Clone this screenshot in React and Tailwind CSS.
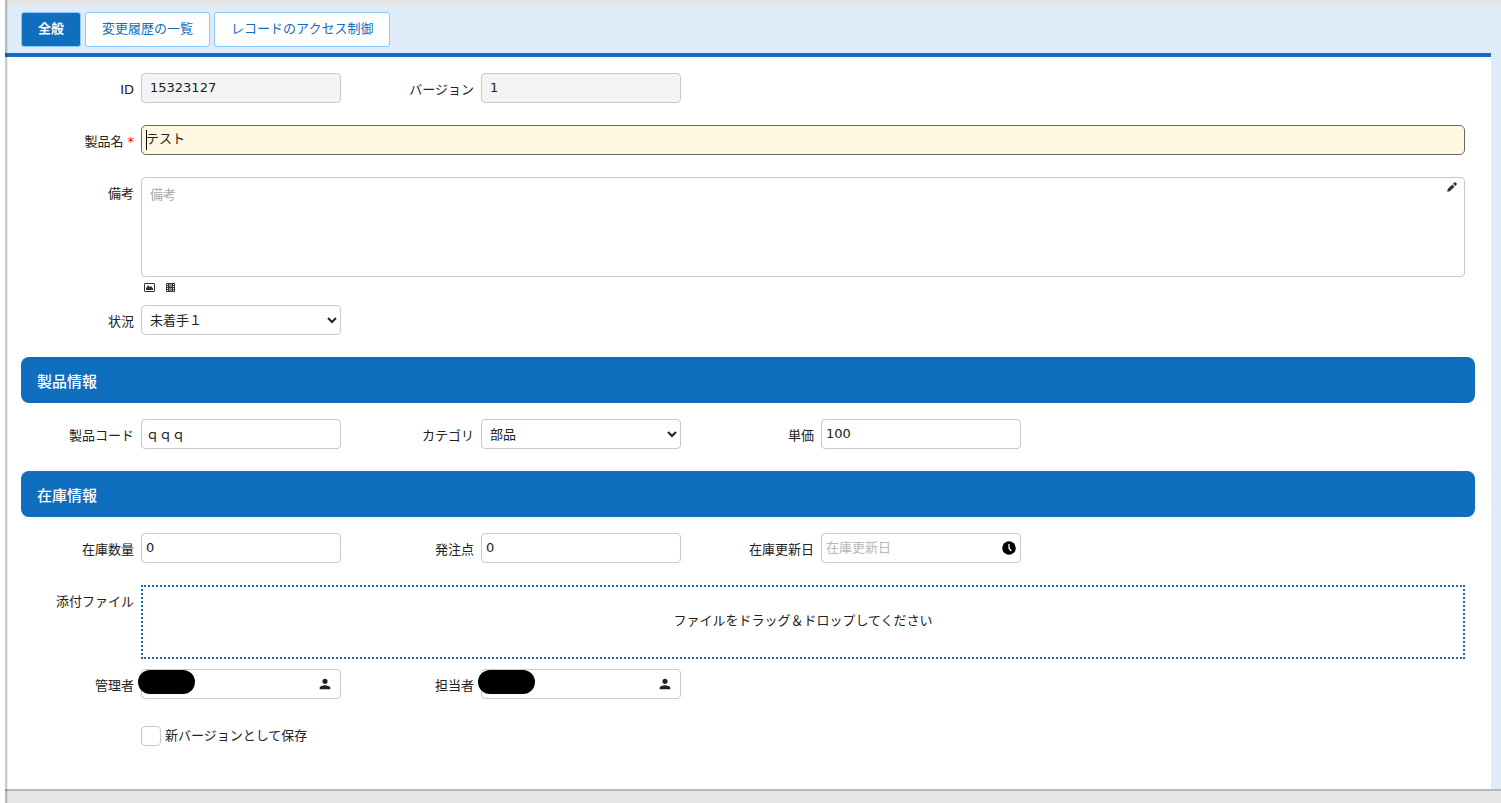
import { useState } from "react";
import { MdPerson } from "react-icons/md";
import clsx from "clsx";

const TABS = [
  { id: "general", label: "全般" },
  { id: "history", label: "変更履歴の一覧" },
  { id: "access", label: "レコードのアクセス制御" },
];

const BOX = "h-[30px] w-[200px] rounded-[4px] border border-[#c8c8c8] text-[13px] text-[#222]";

function Field({ label, required, wide, children }) {
  return (
    <div className={clsx("flex", wide ? "w-[1444px]" : "w-[320px]")}>
      <div className="h-[30px] w-[120px] shrink-0 pt-[7px] pr-[7px] text-right leading-5 whitespace-nowrap">
        {label}
        {required && <span className="pl-1 text-[#f00]">*</span>}
      </div>
      {children}
    </div>
  );
}

function ReadOnly({ value }) {
  return <div className={clsx(BOX, "bg-[#f4f4f4] pl-2 leading-[28px]")}>{value}</div>;
}

function TextInput({ defaultValue, placeholder }) {
  return (
    <input
      defaultValue={defaultValue}
      placeholder={placeholder}
      className={clsx(BOX, "bg-white pb-[2px] pl-1 outline-none placeholder:text-[#b8b8b8]")}
    />
  );
}

function Select({ value }) {
  return (
    <button type="button" className={clsx(BOX, "flex items-center justify-between bg-white pr-[3px] pl-2")}>
      <span className="pt-[2px]">{value}</span>
      <svg width="10" height="10" viewBox="0 0 10 10" fill="none" stroke="#222" strokeWidth="2">
        <path d="M1 3l4 4 4-4" />
      </svg>
    </button>
  );
}

function UserPicker() {
  return (
    <div className={clsx(BOX, "relative flex items-center justify-end bg-white pr-[7px]")}>
      <span className="absolute top-0 -left-[4px] h-6 w-[57px] rounded-full bg-black" />
      <MdPerson size={16} />
    </div>
  );
}

function SectionHeader({ title }) {
  return (
    <h2 className="flex h-[46px] w-[1454px] items-center rounded-lg bg-[#106ebe] px-4 pt-1 text-[15px] font-medium text-white">
      {title}
    </h2>
  );
}

function PencilIcon() {
  return (
    <svg width="10" height="10" viewBox="0 0 10 10" fill="#333">
      <path d="M.2 9.800l.5-2.700L5.300 2.500l2.200 2.200-4.600 4.600zM6 1.800L7.300.5a1 1 0 0 1 1.400 0l.8.8a1 1 0 0 1 0 1.400L8.200 4z" />
    </svg>
  );
}

function ImageIcon() {
  return (
    <svg width="11" height="9" viewBox="0 0 11 9">
      <rect x=".5" y=".5" width="10" height="8" rx=".5" fill="#fff" stroke="#333" />
      <path d="M2 7V5l1-1 1-2 1.500 2L7 3l2 2.500V7z" fill="#333" />
    </svg>
  );
}

function VideoIcon() {
  return (
    <svg width="9" height="9" viewBox="0 0 9 9">
      <rect width="9" height="9" rx=".8" fill="#333" />
      <path d="M1 1h1v1H1zM1 3h1v1H1zM1 5h1v1H1zM1 7h1v1H1zM7 1h1v1H7zM7 3h1v1H7zM7 5h1v1H7zM7 7h1v1H7z" fill="#fff" />
      <path d="M3 1h3v3H3zM3 5h3v3H3z" fill="#888" />
    </svg>
  );
}

function ClockIcon() {
  return (
    <svg width="14" height="14" viewBox="0 0 14 14">
      <circle cx="7" cy="7" r="6.8" fill="#000" />
      <path d="M7 3v4.200l2.200 2.800" fill="none" stroke="#fff" strokeWidth="1.300" />
    </svg>
  );
}

export default function App() {
  const [activeTab, setActiveTab] = useState("general");

  return (
    <div className="flex h-[803px] w-[1501px] overflow-hidden bg-white pl-[5px] font-['DejaVu_Sans','Noto_Sans_CJK_JP',sans-serif] text-[13px] text-[#222]">
      <div className="relative flex flex-1 flex-col bg-[#e6e6e6] pt-[6px]">
        <div className="pointer-events-none absolute inset-y-0 left-0 w-[3px] border-l-2 border-black/20 bg-black/7 bg-clip-padding" />
        <div className="h-[783px] bg-[#deecf9] pr-[10px]">
          <div className="flex h-[51px] items-start gap-1 border-b-4 border-[#106ebe] pt-[6px] pl-4">
            {TABS.map((tab) => (
              <button
                key={tab.id}
                onClick={() => setActiveTab(tab.id)}
                className={clsx(
                  "h-[35px] rounded-[3px] border px-4 pb-[2px]",
                  activeTab === tab.id
                    ? "border-[#8ac8ff] bg-[#106ebe] font-bold text-white"
                    : "border-[#8ac8ff] bg-white text-[#106ebe]"
                )}
              >
                {tab.label}
              </button>
            ))}
          </div>

          <form className="flex h-[732px] flex-col bg-white pt-4 pl-4">
            <div className="flex gap-5">
              <Field label="ID"><ReadOnly value="15323127" /></Field>
              <Field label="バージョン"><ReadOnly value="1" /></Field>
            </div>

            <div className="mt-[22px]">
              <Field label="製品名" required wide>
                <div className="flex h-[30px] flex-1 items-center rounded-[5px] border border-[#666] bg-[#fff8e1] pl-1">
                  <span className="h-5 w-px bg-black" />
                  <span className="-ml-px pb-[2px]">テスト</span>
                </div>
              </Field>
            </div>

            <div className="mt-[22px]">
              <Field label="備考" wide>
                <div className="flex-1">
                  <div className="flex h-[100px] justify-between rounded-[4px] border border-[#c8c8c8] pt-[4px] pr-[7px] pl-2">
                    <span className="pt-[3px] leading-5 text-[#aaa]">備考</span>
                    <PencilIcon />
                  </div>
                  <div className="flex gap-[11px] pt-[6px] pl-[3px]">
                    <ImageIcon />
                    <VideoIcon />
                  </div>
                </div>
              </Field>
            </div>

            <div className="mt-[13px]">
              <Field label="状況"><Select value="未着手１" /></Field>
            </div>

            <div className="mt-[22px]"><SectionHeader title="製品情報" /></div>
            <div className="mt-4 flex gap-5">
              <Field label="製品コード"><TextInput defaultValue="ｑｑｑ" /></Field>
              <Field label="カテゴリ"><Select value="部品" /></Field>
              <Field label="単価"><TextInput defaultValue="100" /></Field>
            </div>

            <div className="mt-[22px]"><SectionHeader title="在庫情報" /></div>
            <div className="mt-4 flex gap-5">
              <Field label="在庫数量"><TextInput defaultValue="0" /></Field>
              <Field label="発注点"><TextInput defaultValue="0" /></Field>
              <Field label="在庫更新日">
                <div className="relative">
                  <TextInput placeholder="在庫更新日" />
                  <span className="absolute top-2 right-[5px]"><ClockIcon /></span>
                </div>
              </Field>
            </div>

            <div className="mt-[22px]">
              <Field label="添付ファイル" wide>
                <div className="flex h-[74px] flex-1 items-center justify-center border-2 border-dotted border-[#106ebe] pb-[2px]">
                  ファイルをドラッグ＆ドロップしてください
                </div>
              </Field>
            </div>

            <div className="mt-[10px] flex gap-5">
              <Field label="管理者"><UserPicker /></Field>
              <Field label="担当者"><UserPicker /></Field>
            </div>

            <label className="mt-[27px] ml-[120px] flex h-5 items-center gap-1">
              <span className="size-5 rounded-[4px] border border-[#c8c8c8]" />
              新バージョンとして保存
            </label>
          </form>
        </div>
        <div className="h-[2px] bg-[#b8b8b8]" />
      </div>
    </div>
  );
}
